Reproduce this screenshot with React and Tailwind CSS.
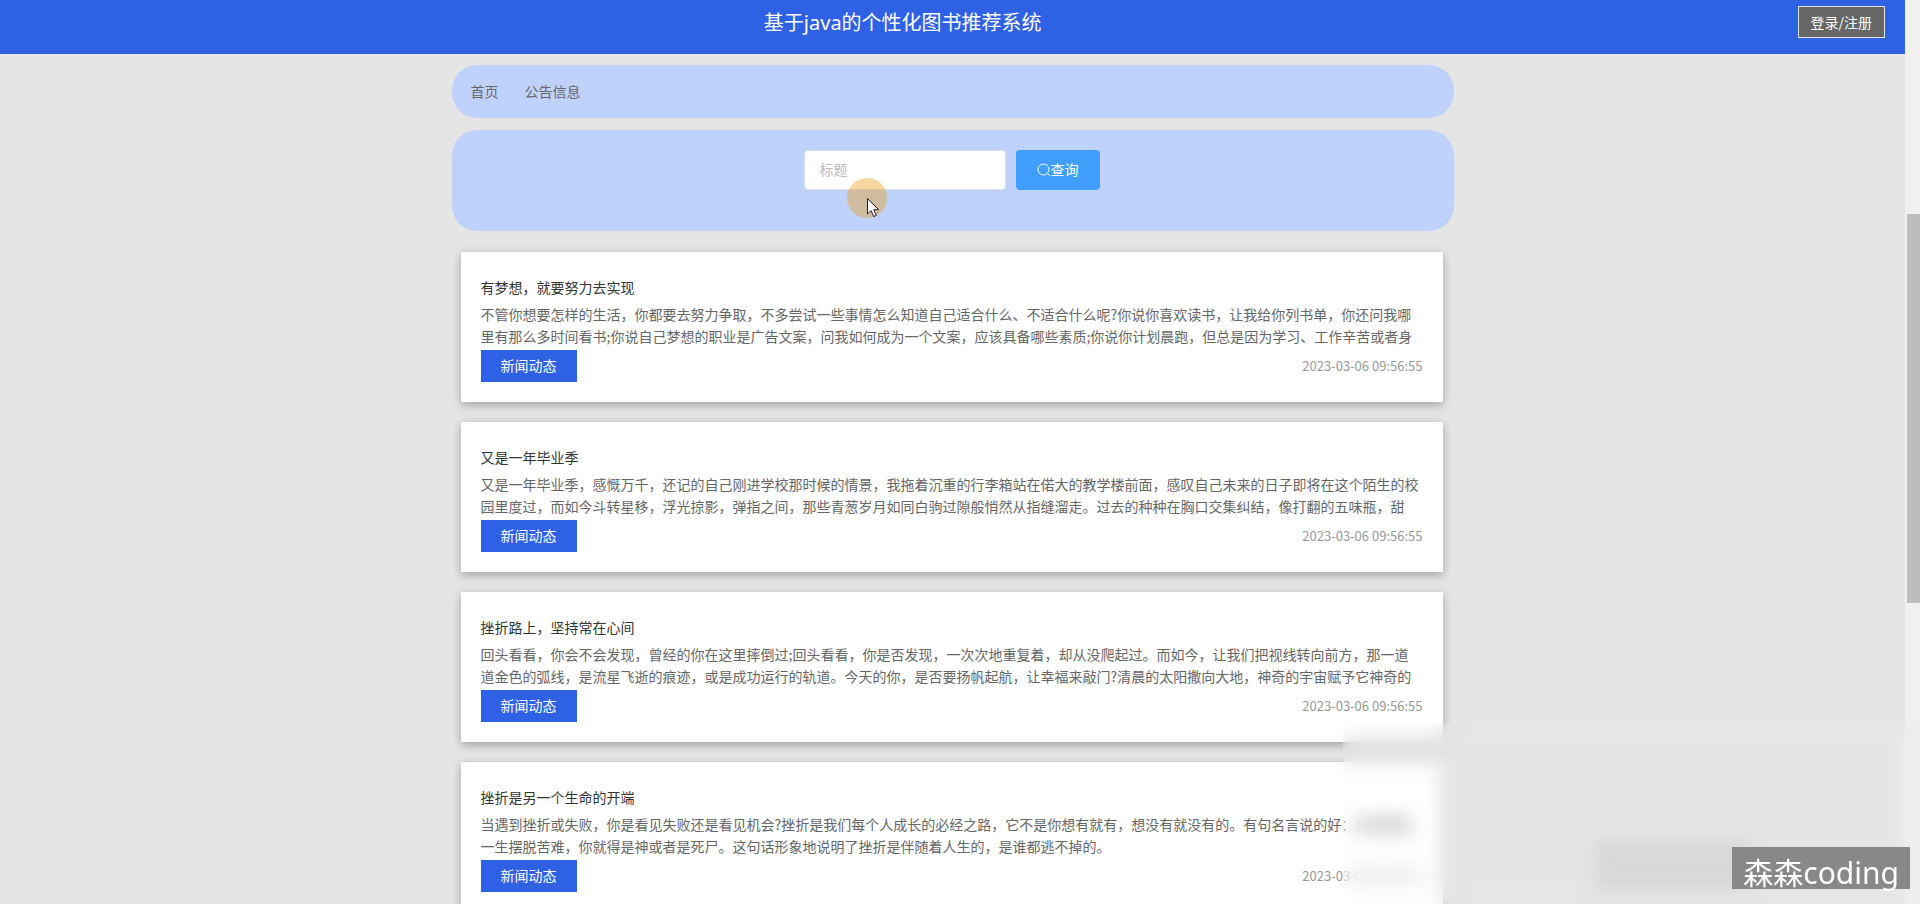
const posts = [
  {
    title: "有梦想，就要努力去实现",
    text: "不管你想要怎样的生活，你都要去努力争取，不多尝试一些事情怎么知道自己适合什么、不适合什么呢?你说你喜欢读书，让我给你列书单，你还问我哪里有那么多时间看书;你说自己梦想的职业是广告文案，问我如何成为一个文案，应该具备哪些素质;你说你计划晨跑，但总是因为学习、工作辛苦或者身",
  },
  {
    title: "又是一年毕业季",
    text: "又是一年毕业季，感慨万千，还记的自己刚进学校那时候的情景，我拖着沉重的行李箱站在偌大的教学楼前面，感叹自己未来的日子即将在这个陌生的校园里度过，而如今斗转星移，浮光掠影，弹指之间，那些青葱岁月如同白驹过隙般悄然从指缝溜走。过去的种种在胸口交集纠结，像打翻的五味瓶，甜",
  },
  {
    title: "挫折路上，坚持常在心间",
    text: "回头看看，你会不会发现，曾经的你在这里摔倒过;回头看看，你是否发现，一次次地重复着，却从没爬起过。而如今，让我们把视线转向前方，那一道道金色的弧线，是流星飞逝的痕迹，或是成功运行的轨道。今天的你，是否要扬帆起航，让幸福来敲门?清晨的太阳撒向大地，神奇的宇宙赋予它神奇的",
  },
  {
    title: "挫折是另一个生命的开端",
    text: "当遇到挫折或失败，你是看见失败还是看见机会?挫折是我们每个人成长的必经之路，它不是你想有就有，想没有就没有的。有句名言说的好：如果谁能一生摆脱苦难，你就得是神或者是死尸。这句话形象地说明了挫折是伴随着人生的，是谁都逃不掉的。",
  },
];

function Header() {
  return (
    <header className="flex h-[54px] items-start bg-[#2e61e4] pr-5 pl-2 text-white">
      <h1 className="flex-1 pt-[9px] text-center font-['Noto_Sans','Noto_Sans_CJK_SC',sans-serif] text-xl leading-7">
        基于java的个性化图书推荐系统
      </h1>
      <button className="mt-1.5 h-8 border border-[#e4e4e4] bg-[#666] px-3 text-sm leading-5">登录/注册</button>
    </header>
  );
}

function PostCard({ title, text }) {
  return (
    <article className="bg-white p-5 text-sm shadow-[0_3px_9px_rgba(0,0,0,0.3)]">
      <h2 className="leading-[30px] text-[#333]">{title}</h2>
      <p className="mt-px mr-0.5 mb-[3px] line-clamp-2 leading-[22px] text-[#666]">{text}</p>
      <div className="flex items-center justify-between">
        <button className="h-8 bg-[#2e61e4] px-5 pb-0.5 text-white">新闻动态</button>
        <time className="text-[13px] text-[#999]">2023-03-06 09:56:55</time>
      </div>
    </article>
  );
}

function Pointer() {
  return (
    <div className="pointer-events-none absolute top-[178px] left-[847px] size-10" aria-hidden="true">
      <svg viewBox="0 0 40 40" className="size-10">
        <circle cx="20" cy="20" r="20" fill="#e8a020" fillOpacity="0.42" />
        <path d="M20.500 20.500v15.500l3.600-3.300 2.600 5.800 2.600-1.100-2.600-5.700h5z" fill="#fff" stroke="#2a1a20" />
      </svg>
    </div>
  );
}

export default function App() {
  return (
    <div className="relative flex h-screen overflow-hidden bg-[#e5e5e5] font-['Noto_Sans_CJK_SC',sans-serif]">
      <div className="min-w-0 flex-1 overflow-hidden">
        <Header />
        <main className="mx-auto mt-[11px] flex max-w-[1002px] flex-col gap-3">
          <nav className="flex h-[53px] items-center gap-[26px] rounded-[25px] bg-[#bfd2fc] px-[19px] pb-0.5 text-sm text-[#666]">
            <a href="#home">首页</a>
            <a href="#notice">公告信息</a>
          </nav>
          <form className="flex h-[101px] items-start justify-center gap-2.5 rounded-[25px] bg-[#bfd2fc] pt-5 pr-0.5">
            <input
              type="text"
              aria-label="标题"
              placeholder="标题"
              className="h-10 w-[202px] rounded border border-[#dcdfe6] bg-white px-[15px] pb-0.5 text-sm placeholder:text-[#bbbcc2]"
            />
            <button type="button" className="flex h-10 items-center rounded bg-[#409eff] px-[21px] text-sm text-white">
              <svg viewBox="0 0 14 14" className="size-3.5" fill="none" stroke="currentColor" aria-hidden="true">
                <circle cx="6.500" cy="6.500" r="5.500" />
                <path d="M10.500 10.500l2.500 2.500" />
              </svg>
              <span className="pb-0.5">查询</span>
            </button>
          </form>
          <section className="mt-[9px] flex flex-col gap-5 pr-[11px] pl-[9px]">
            {posts.map((post) => (
              <PostCard key={post.title} {...post} />
            ))}
          </section>
        </main>
      </div>
      <div className="w-[15px] bg-[#f0f0f1] pt-[214px] pl-0.5" aria-hidden="true">
        <div className="h-[389px] bg-[#bdbdbd]" />
      </div>

      <Pointer />
      <div className="absolute right-0 bottom-0 h-[181px] w-[577px] backdrop-blur-[10px]" aria-hidden="true" />
      <div className="absolute right-[170px] bottom-3.5 h-[50px] w-[155px] bg-[#d8d8d8] blur-[8px]" aria-hidden="true" />
      <div className="absolute right-2.5 bottom-[15px] h-[42px] bg-[#888] px-[11px] font-['Noto_Sans','Noto_Sans_CJK_SC',sans-serif] text-[30px] leading-[52px] text-white">
        森森coding
      </div>
    </div>
  );
}
